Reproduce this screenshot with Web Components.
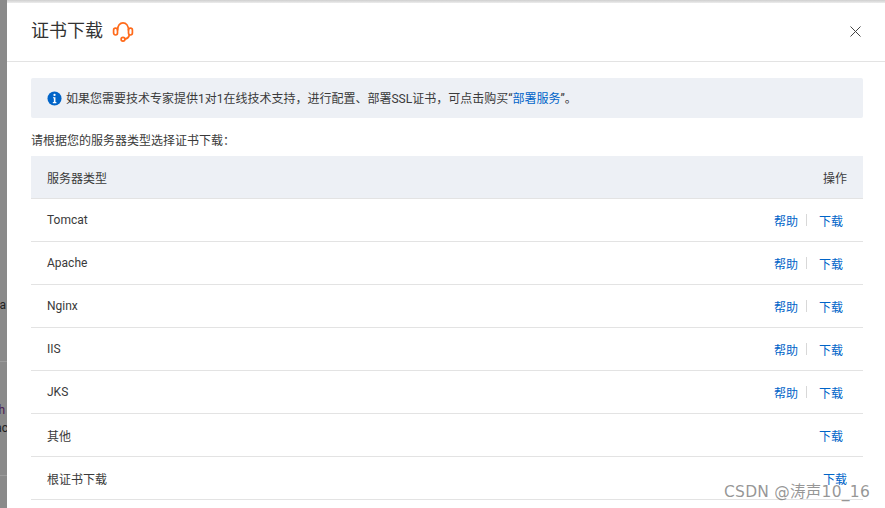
<!DOCTYPE html>
<html>
<head>
<meta charset="utf-8">
<style>
html, body { margin: 0; height: 100%; overflow: hidden; background: #fff; }
body { font-family: Roboto, "Noto Sans CJK SC", sans-serif; font-size: 12px; color: #3a3a3a; }
</style>
</head>
<body>
<cert-page>
  <info-alert>如果您需要技术专家提供1对1在线技术支持，进行配置、部署SSL证书，可点击购买“<a>部署服务</a>”。</info-alert>
  <table-label>请根据您的服务器类型选择证书下载：</table-label>
  <server-table>
    <server-row name="Tomcat" help></server-row>
    <server-row name="Apache" help></server-row>
    <server-row name="Nginx" help></server-row>
    <server-row name="IIS" help></server-row>
    <server-row name="JKS" help></server-row>
    <server-row name="其他"></server-row>
    <server-row name="根证书下载" last></server-row>
  </server-table>
</cert-page>
<script>
class CertPage extends HTMLElement {
  constructor() {
    super()
    this.attachShadow({ mode: "open" })
    this.shadowRoot.innerHTML = `
<style>
:host { display: grid; grid-template-columns: 7px 1fr; height: 508px; position: relative; overflow: hidden; }
.back { background: #8a8a8a; overflow: hidden; font-size: 12px; color: #222; display: flex; flex-direction: column; align-items: flex-end; }
.back .line { height: 1px; background: #9c9c9c; width: 100%; flex: none; }
.back .t { line-height: 16px; white-space: nowrap; }
.dialog { background: #fff; display: flex; flex-direction: column; min-width: 0; }
.top { height: 3px; background: linear-gradient(#cfcfcf, #ececec); flex: none; }
.head { height: 59px; flex: none; box-sizing: border-box; border-bottom: 1px solid #e3e3e3; display: flex; align-items: center; padding: 0 24px 2px; font-size: 18px; color: #333; }
.head span { line-height: 24px; }
.head .phone { width: 24px; height: 24px; margin-left: 8px; }
.head .close { width: 13px; height: 13px; margin-left: auto; margin-right: -1px; }
.body { padding: 16px 22px 0 24px; display: flex; flex-direction: column; }
.mark { position: absolute; left: 724px; top: 479px; font: 15.5px "DejaVu Sans", "Noto Sans CJK SC", sans-serif; color: rgba(110,110,110,.72); white-space: nowrap; letter-spacing: .25px; }
</style>
<div class="back">
  <div class="t" style="margin-top:297px;margin-right:1px">a</div>
  <div class="line" style="margin-top:48px"></div>
  <div class="t" style="margin-top:40px;margin-right:2px;color:#4a1d55">h</div>
  <div class="t" style="margin-top:2px;margin-right:-1px">ac</div>
  <div class="line" style="margin-top:39px"></div>
</div>
<div class="dialog">
  <div class="top"></div>
  <div class="head">
    <span>证书下载</span>
    <svg class="phone" viewBox="0 0 24 24" fill="none" stroke="#ff6a1a" stroke-width="1.7">
      <path d="M6.5 11.5C6.5 6.5 9 3.8 12 3.8s5.5 2.7 5.5 7.7"/>
      <rect x="2.6" y="9.2" width="3.9" height="6.8" rx="1.9"/>
      <rect x="17.5" y="9.2" width="3.9" height="6.8" rx="1.9"/>
      <path d="M18.4 16c-.6 2.6-2.4 3.8-4.6 4.2"/>
      <circle cx="12" cy="20.2" r="1.9"/>
    </svg>
    <svg class="close" viewBox="0 0 13 13" stroke="#444" stroke-width="1"><path d="M1.5 1.5l10 10M11.5 1.5l-10 10"/></svg>
  </div>
  <div class="body">
    <slot></slot>
  </div>
</div>
<div class="mark">CSDN @涛声10_16</div>
`
  }
}

class InfoAlert extends HTMLElement {
  constructor() {
    super()
    this.attachShadow({ mode: "open" })
    this.shadowRoot.innerHTML = `
<style>
:host { display: flex; align-items: center; height: 40px; box-sizing: border-box; padding: 1px 16px 0; background: #edf0f5; border-radius: 2px; line-height: 16px; }
svg { width: 15px; height: 15px; margin-right: 4px; flex: none; }
::slotted(a) { color: #0064c8; }
</style>
<svg viewBox="0 0 16 16"><circle cx="8" cy="8" r="7.5" fill="#0064c8"/><circle cx="8" cy="4.2" r="1.2" fill="#fff"/><path d="M6.4 6.6h2.6v5.2h1v1.2H6.2v-1.2h1.1V7.8h-.9z" fill="#fff"/></svg>
<div><slot></slot></div>
`
  }
}

class TableLabel extends HTMLElement {
  constructor() {
    super()
    this.attachShadow({ mode: "open" })
    this.shadowRoot.innerHTML = `
<style>
:host { display: block; line-height: 16px; margin: 15px 0 7px; }
</style>
<slot></slot>
`
  }
}

class ServerTable extends HTMLElement {
  constructor() {
    super()
    this.attachShadow({ mode: "open" })
    this.shadowRoot.innerHTML = `
<style>
:host { display: block; }
.th { height: 43px; box-sizing: border-box; background: #edf0f5; border-bottom: 1px solid #e3e3e3; display: flex; justify-content: space-between; align-items: center; padding: 0 16px; }
</style>
<div class="th"><span>服务器类型</span><span>操作</span></div>
<slot></slot>
`
  }
}

class ServerRow extends HTMLElement {
  constructor() {
    super()
    this.attachShadow({ mode: "open" })
    const help = this.hasAttribute("help")
    this.shadowRoot.innerHTML = `
<style>
:host { display: flex; justify-content: space-between; align-items: center; height: 43px; box-sizing: border-box; border-bottom: 1px solid #e3e3e3; padding: 0 20px 0 16px; }
:host([last]) { padding-right: 16px; }
.ops { display: flex; align-items: center; color: #0064c8; }
.sep { width: 1px; height: 12px; background: #d8d8d8; margin: 0 12px 0 8px; }
</style>
<span>${this.getAttribute("name")}</span>
<div class="ops">${help ? '<span>帮助</span><i class="sep"></i>' : ""}<span>下载</span></div>
`
  }
}

customElements.define("cert-page", CertPage)
customElements.define("info-alert", InfoAlert)
customElements.define("table-label", TableLabel)
customElements.define("server-table", ServerTable)
customElements.define("server-row", ServerRow)
</script>
</body>
</html>
